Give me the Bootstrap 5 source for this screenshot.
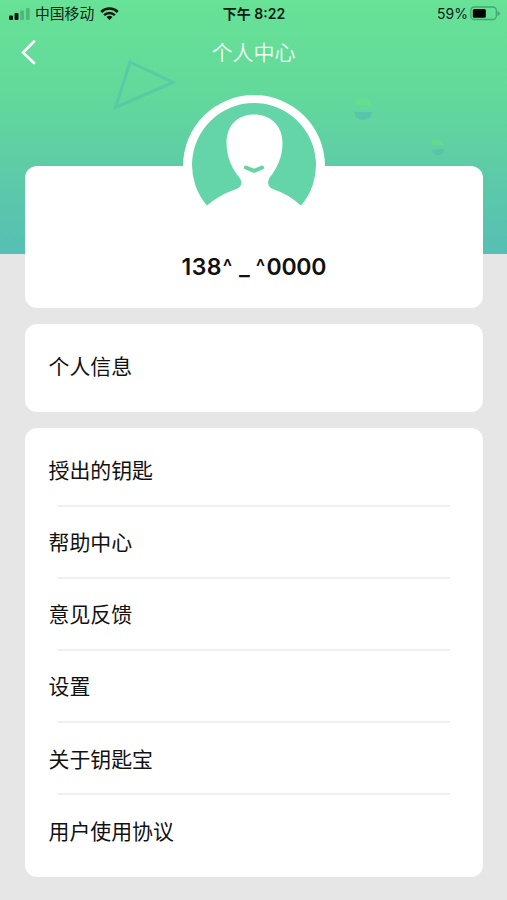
<!DOCTYPE html>
<html lang="zh-CN">
<head>
<meta charset="utf-8">
<meta name="viewport" content="width=device-width, initial-scale=1">
<title>个人中心</title>
<link rel="stylesheet" href="https://cdn.jsdelivr.net/npm/bootstrap@5.3.0/dist/css/bootstrap.min.css">
<style>
  body { background: #e6e6e6; color: #111; font-family: Inter, "Noto Sans CJK SC", sans-serif; height: 900px; overflow: hidden; }
  .hero { height: 254px; background: linear-gradient(#67e296 0%, #63d99b 36%, #57beb4 100%); }
  .decor { left: 0; top: 0; }
  .status { height: 28px; padding: 0 7px 0 8px; font-size: 14px; line-height: 28px; color: #0b2416; }
  .status > div { flex: 1 1 0; }
  .carrier { font-size: 14.8px; margin-left: 5px; margin-right: 6px; }
  .clock { font-weight: 600; font-size: 14px; color: #082013; }
  .battery { margin-left: 2px; }
  .titlebar { height: 50px; padding: 0 21px; }
  .titlebar h1 { font-size: 21px; line-height: 50px; font-weight: 350; color: #f1fff6; }
  .edge { width: 16px; }
  .content { margin: -88px 24px 0 24.5px; gap: 16px; }
  .panel { background: #fff; border-radius: 12px; }
  .profile { height: 142px; }
  .avatar { margin-top: -71px; }
  .phone { font-size: 23px; line-height: 30px; font-weight: 600; margin-top: 15px; color: #111; white-space: pre; }
  .lead-digits { letter-spacing: .5px; }
  .caret { display: inline-block; transform: scaleX(.85); }
  .tail { letter-spacing: -.3px; }
  .entry { font-size: 20.9px; line-height: 30px; padding-left: 24px; }
  .info { height: 88px; padding-bottom: 2px; }
  .menu { height: 449px; padding-top: 6px; }
  .menu .entry { height: 72.2px; padding-top: 1.5px; }
  .rule { height: 2px; background: #f0f0f0; margin: -1.5px 33px -.5px 33px; }
</style>
<script src="https://cdn.jsdelivr.net/npm/bootstrap@5.3.0/dist/js/bootstrap.bundle.min.js"></script>
</head>
<body>
<header class="hero position-relative">
  <svg class="decor position-absolute" width="507" height="254" viewBox="0 0 507 254">
    <path d="M130 62L173 82.500L115.500 107.500Z" fill="none" stroke="#5bcaa4" stroke-width="3"/>
    <path d="M355.500 105q0-7 8-7t7.500 7z" fill="#63df8f"/>
    <path d="M354.500 112h17.500q-1 8-9 8t-8.500-8z" fill="#58c5aa"/>
    <path d="M432 145v-5h6q5 0 6 5z" fill="#62da90"/>
    <path d="M432 149h12q-1 6-6 6t-6-6z" fill="#57c4ab"/>
  </svg>
  <div class="status d-flex align-items-center position-relative">
    <div class="d-flex align-items-center">
      <svg width="22" height="14" viewBox="0 0 22 14">
        <rect x="1" y="8.500" width="4" height="4.500" rx="1" fill="#061a0e"/>
        <rect x="6.500" y="6" width="4" height="7" rx="1" fill="#061a0e"/>
        <rect x="12.200" y="3.500" width="3.800" height="9.500" rx="1" fill="#4cb87c"/>
        <rect x="17.900" y="1" width="3.800" height="12" rx="1" fill="#4cb87c"/>
      </svg>
      <span class="carrier">中国移动</span>
      <svg width="19" height="14" viewBox="0 0 19 14" fill="none" stroke="#061a0e" stroke-width="2.500">
        <path d="M1.200 5A11.800 11.800 0 0 1 17.800 5"/>
        <path d="M4.100 8.100A7.700 7.700 0 0 1 14.900 8.100"/>
        <path d="M9.500 13L6.500 10.100a4.300 4.300 0 0 1 6 0z" fill="#061a0e" stroke="none"/>
      </svg>
    </div>
    <div class="clock text-center">下午 8:22</div>
    <div class="d-flex align-items-center justify-content-end">
      <span>59%</span>
      <svg class="battery" width="30" height="16" viewBox="0 0 30 16">
        <rect x=".8" y="1" width="25.500" height="12.500" rx="3.500" fill="none" stroke="#43a56f" stroke-width="1.300"/>
        <rect x="2.800" y="2.900" width="13" height="8.800" rx="1.500" fill="#000"/>
        <path d="M27.500 5q2.500 1 2.500 2.500t-2.500 2.500z" fill="#43a56f"/>
      </svg>
    </div>
  </div>
  <nav class="titlebar d-flex align-items-center justify-content-between position-relative">
    <svg class="edge" width="16" height="26" viewBox="0 0 16 26"><path d="M13 1.500L2 12.500L13 23" fill="none" stroke="#fff" stroke-width="2.600" stroke-linecap="round" stroke-linejoin="round"/></svg>
    <h1 class="m-0">个人中心</h1>
    <span class="edge"></span>
  </nav>
</header>
<main class="content d-flex flex-column position-relative">
  <section class="panel profile d-flex flex-column align-items-center">
    <svg class="avatar flex-shrink-0" width="142" height="142" viewBox="0 0 142 142">
      <circle cx="71" cy="71" r="71" fill="#fff"/>
      <path d="M24 110.500A62 62 0 1 1 118 110.500Q105 99 91 94.500C84 92 84 87 87 82C93 75 99.500 63 99.500 48C99.500 30 87 19.500 71 19.500S43.500 30 43.500 48C43.500 63 50 75 56 82C60 87 59 92 52 94.500Q36 100 24 110.500Z" fill="#63d5a9"/>
      <path d="M63 72.500L71 75.800L79 72.500" fill="none" stroke="#63d5a0" stroke-width="4" stroke-linecap="round" stroke-linejoin="round"/>
    </svg>
    <div class="phone"><span class="lead-digits">138</span><span class="caret">^</span> _ <span class="caret">^</span><span class="tail">0000</span></div>
  </section>
  <section class="panel info d-flex align-items-center"><div class="entry">个人信息</div></section>
  <section class="panel menu">
    <div class="entry d-flex align-items-center">授出的钥匙</div><div class="rule"></div>
    <div class="entry d-flex align-items-center">帮助中心</div><div class="rule"></div>
    <div class="entry d-flex align-items-center">意见反馈</div><div class="rule"></div>
    <div class="entry d-flex align-items-center">设置</div><div class="rule"></div>
    <div class="entry d-flex align-items-center">关于钥匙宝</div><div class="rule"></div>
    <div class="entry d-flex align-items-center">用户使用协议</div>
  </section>
</main>
</body>
</html>
